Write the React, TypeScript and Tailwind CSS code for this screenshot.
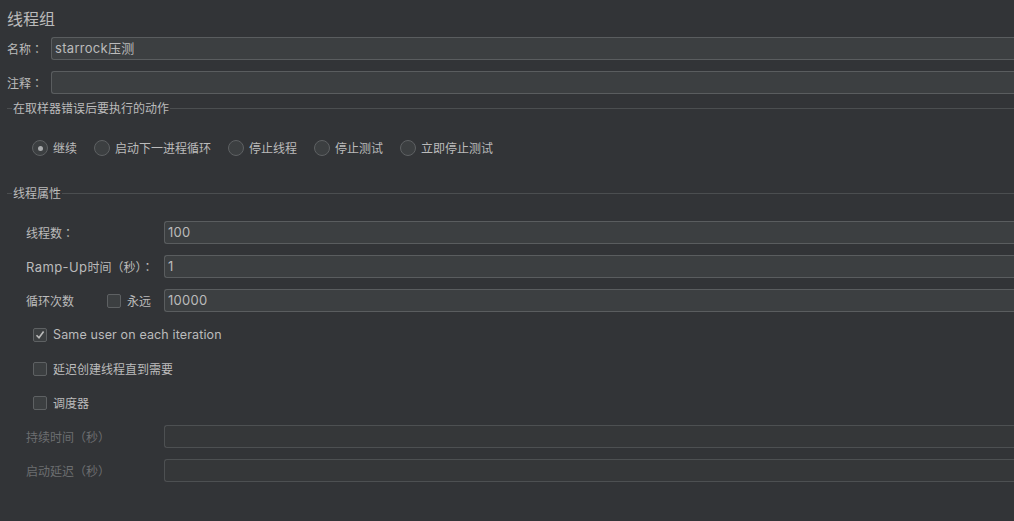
import React from "react";

const font = { fontFamily: "Inter, 'Noto Sans CJK SC', sans-serif" };

// fullwidth punctuation centred like the mac font
function P({ c }: { c: string }) {
  return <span style={{ fontFamily: "'Noto Sans CJK TC', sans-serif" }}>{c}</span>;
}

function Field({ value = "", disabled = false }: { value?: string; disabled?: boolean }) {
  return (
    <div
      className={`flex h-[23px] flex-1 items-center rounded-l-[3px] border border-r-0 pl-[3px] pt-[1px] text-[13px] tracking-[0.3px] ${
        disabled ? "border-[#4d5052] bg-[#353739]" : "border-[#5a5d5f] bg-[#3c3f41]"
      } text-[#bbbbbb]`}
    >
      {value}
    </div>
  );
}

function Legend({ text }: { text: string }) {
  return (
    <div className="flex h-[16px] items-center">
      <div className="h-px w-[5px] bg-[#4b4e50]" />
      <span className="px-[1px] pt-[1px] text-[12px] text-[#bbbbbb]">{text}</span>
      <div className="h-px flex-1 bg-[#4b4e50]" />
    </div>
  );
}

function Radio({ label, checked = false }: { label: string; checked?: boolean }) {
  return (
    <div className="flex items-center gap-[5px]">
      <div className="flex h-[16px] w-[16px] items-center justify-center rounded-full border border-[#5e6163] bg-[#3c3f41]">
        {checked && <div className="h-[5px] w-[5px] rounded-full bg-[#a9abad]" />}
      </div>
      <span className="pt-[1px] text-[12px] text-[#bbbbbb]">{label}</span>
    </div>
  );
}

function Check({ checked = false }: { checked?: boolean }) {
  return (
    <div className="flex h-[14px] w-[14px] shrink-0 items-center justify-center rounded-[2px] border border-[#5e6163] bg-[#3c3f41]">
      {checked && (
        <svg width="10" height="10" viewBox="0 0 10 10">
          <path d="M1.5 5.2 L4 7.8 L8.6 1.6" fill="none" stroke="#bbbbbb" strokeWidth="1.6" />
        </svg>
      )}
    </div>
  );
}

export default function App() {
  return (
    <div className="h-[521px] w-[1014px] overflow-hidden bg-[#323437] pl-[7px]" style={font}>
      <div className="flex h-[37px] items-center text-[16px] text-[#bbbbbb]">线程组</div>

      <div className="flex h-[23px] items-center">
        <span className="w-[44px] pt-[2px] text-[12px] text-[#bbbbbb]">
          名称<P c="：" />
        </span>
        <Field value="starrock压测" />
      </div>
      <div className="mt-[11px] flex h-[23px] items-center">
        <span className="w-[44px] pt-[2px] text-[12px] text-[#bbbbbb]">
          注释<P c="：" />
        </span>
        <Field />
      </div>

      <div className="mt-[6px]">
        <Legend text="在取样器错误后要执行的动作" />
      </div>
      <div className="mt-[24px] flex h-[16px] items-center gap-[17px] pl-[25px]">
        <Radio label="继续" checked />
        <Radio label="启动下一进程循环" />
        <Radio label="停止线程" />
        <Radio label="停止测试" />
        <Radio label="立即停止测试" />
      </div>

      <div className="mt-[29px]">
        <Legend text="线程属性" />
      </div>

      <div className="mt-[20px] flex flex-col gap-[11px] pl-[19px]">
        <div className="flex h-[23px] items-center">
          <span className="w-[138px] pt-[2px] text-[12px] text-[#bbbbbb]">
            线程数<P c="：" />
          </span>
          <Field value="100" />
        </div>
        <div className="flex h-[23px] items-center">
          <span className="w-[138px] pt-[2px] text-[12px] text-[#bbbbbb]">
            <span className="text-[13px] tracking-[0.4px]">Ramp-Up</span>时间<P c="（" />秒<P c="）" />
            <P c="：" />
          </span>
          <Field value="1" />
        </div>
        <div className="flex h-[23px] items-center">
          <span className="w-[81px] pt-[2px] text-[12px] text-[#bbbbbb]">循环次数</span>
          <Check />
          <span className="ml-[6px] w-[37px] pt-[2px] text-[12px] text-[#bbbbbb]">永远</span>
          <Field value="10000" />
        </div>
      </div>

      <div className="mt-[16px] flex flex-col gap-[20px] pl-[26px]">
        <div className="flex h-[14px] items-center gap-[6px]">
          <Check checked />
          <span className="pt-[1px] text-[12.5px] tracking-[0.13px] text-[#bbbbbb]">Same user on each iteration</span>
        </div>
        <div className="flex h-[14px] items-center gap-[6px]">
          <Check />
          <span className="pt-[1px] text-[12px] text-[#bbbbbb]">延迟创建线程直到需要</span>
        </div>
        <div className="flex h-[14px] items-center gap-[6px]">
          <Check />
          <span className="pt-[1px] text-[12px] text-[#bbbbbb]">调度器</span>
        </div>
      </div>

      <div className="mt-[15px] flex flex-col gap-[11px] pl-[19px]">
        <div className="flex h-[23px] items-center">
          <span className="w-[138px] pt-[2px] text-[12px] text-[#6c6e70]">
            持续时间<P c="（" />秒<P c="）" />
          </span>
          <Field disabled />
        </div>
        <div className="flex h-[23px] items-center">
          <span className="w-[138px] pt-[2px] text-[12px] text-[#6c6e70]">
            启动延迟<P c="（" />秒<P c="）" />
          </span>
          <Field disabled />
        </div>
      </div>
    </div>
  );
}
